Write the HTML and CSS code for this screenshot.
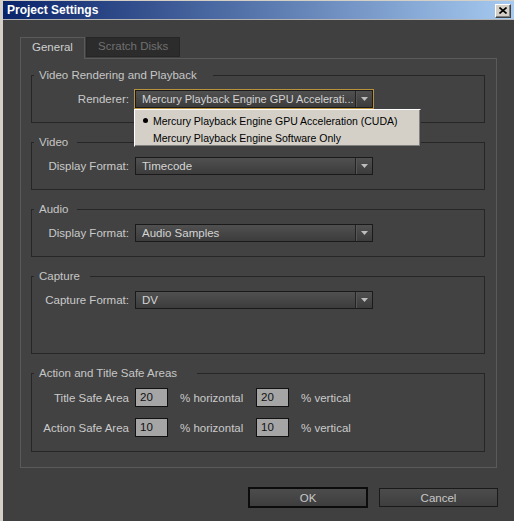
FILE: index.html
```html
<!DOCTYPE html>
<html lang="en">
<head>
<meta charset="utf-8">
<title>Project Settings</title>
<link rel="stylesheet" href="styles.css">
</head>
<body>
<div class="window">
  <div class="titlebar">
    <span class="title">Project Settings</span>
    <button class="close" type="button" aria-label="Close">
      <svg width="8" height="7" viewBox="0 0 8 7"><path d="M0.5 0.5L7.5 6.5M7.5 0.5L0.5 6.5" stroke="#000" stroke-width="1.6" fill="none"/></svg>
    </button>
  </div>
  <div class="client">
    <div class="tabs">
      <div class="tab active">General</div>
      <div class="tab inactive">Scratch Disks</div>
    </div>
    <div class="panel">
      <fieldset class="group">
        <legend class="lg-render">Video Rendering and Playback</legend>
        <div class="row">
          <span class="lbl">Renderer:</span>
          <div class="select focused">
            <span class="val">Mercury Playback Engine GPU Accelerati...</span>
            <span class="drop"><svg width="7" height="4" viewBox="0 0 7 4"><path d="M0 0H7L3.5 4Z" fill="#bdbdbd"/></svg></span>
            <div class="menu">
              <div class="item"><span class="dot"></span>Mercury Playback Engine GPU Acceleration (CUDA)</div>
              <div class="item"><span class="dot off"></span>Mercury Playback Engine Software Only</div>
            </div>
          </div>
        </div>
      </fieldset>
      <fieldset class="group">
        <legend class="lg-short">Video</legend>
        <div class="row">
          <span class="lbl">Display Format:</span>
          <div class="select">
            <span class="val">Timecode</span>
            <span class="drop"><svg width="7" height="4" viewBox="0 0 7 4"><path d="M0 0H7L3.5 4Z" fill="#bdbdbd"/></svg></span>
          </div>
        </div>
      </fieldset>
      <fieldset class="group">
        <legend class="lg-short">Audio</legend>
        <div class="row">
          <span class="lbl">Display Format:</span>
          <div class="select">
            <span class="val">Audio Samples</span>
            <span class="drop"><svg width="7" height="4" viewBox="0 0 7 4"><path d="M0 0H7L3.5 4Z" fill="#bdbdbd"/></svg></span>
          </div>
        </div>
      </fieldset>
      <fieldset class="group tall">
        <legend class="lg-capture">Capture</legend>
        <div class="row">
          <span class="lbl">Capture Format:</span>
          <div class="select">
            <span class="val">DV</span>
            <span class="drop"><svg width="7" height="4" viewBox="0 0 7 4"><path d="M0 0H7L3.5 4Z" fill="#bdbdbd"/></svg></span>
          </div>
        </div>
      </fieldset>
      <fieldset class="group">
        <legend class="lg-safe">Action and Title Safe Areas</legend>
        <div class="row row-num">
          <span class="lbl">Title Safe Area</span>
          <span class="num">20</span>
          <span class="unit unit-h">% horizontal</span>
          <span class="num">20</span>
          <span class="unit">% vertical</span>
        </div>
        <div class="row row-num">
          <span class="lbl">Action Safe Area</span>
          <span class="num">10</span>
          <span class="unit unit-h">% horizontal</span>
          <span class="num">10</span>
          <span class="unit">% vertical</span>
        </div>
      </fieldset>
    </div>
    <div class="buttons">
      <button class="btn btn-ok" type="button">OK</button>
      <button class="btn btn-cancel" type="button">Cancel</button>
    </div>
  </div>
</div>
</body>
</html>
```
FILE: styles.css
```css
* { box-sizing: border-box; }

body {
  margin: 0;
  background: #404040;
  font-family: "Liberation Sans", Arial, sans-serif;
  font-size: 11px;
  color: #c8c8c8;
}

.window {
  width: 514px;
  height: 521px;
  background: #404040;
  border-top: 1px solid #d4d0c8;
  border-left: 3px solid #d4d0c8;
  overflow: hidden;
}

.titlebar {
  height: 19px;
  display: flex;
  align-items: center;
  justify-content: space-between;
  padding: 0 3px 0 4px;
  background: linear-gradient(to right, #0a246a, #a6caf0);
  border-bottom: 1px solid #b4b4b4;
}

.title {
  color: #fff;
  font-weight: bold;
  font-size: 12px;
  line-height: 18px;
}

.close {
  width: 16px;
  height: 14px;
  padding: 0;
  margin-top: 1px;
  background: #d4d0c8;
  border: 1px solid;
  border-color: #fff #404040 #404040 #fff;
  box-shadow: inset -1px -1px #808080;
  display: flex;
  align-items: center;
  justify-content: center;
}

.client {
  padding: 17px 17px 0 17px;
}

.tabs {
  display: flex;
  align-items: flex-start;
  gap: 1px;
  height: 21px;
  font-size: 11.5px;
}

.tab {
  padding: 0 11px;
  white-space: nowrap;
}

.tab.active {
  position: relative;
  z-index: 1;
  width: 65px;
  height: 22px;
  line-height: 19px;
  padding-left: 11px;
  background: #424242;
  border: 1px solid #5a5a5a;
  border-bottom: none;
  color: #cfcfcf;
}

.tab.inactive {
  width: 94px;
  height: 20px;
  line-height: 17px;
  background: #2c2c2c;
  border: 1px solid #262626;
  color: #707070;
}

.panel {
  background: #424242;
  border: 1px solid #5a5a5a;
  padding: 10px 11px 15px 10px;
}

.group {
  margin: 13px 0 0;
  padding: 8px 0 14px;
  border: 1px solid #262626;
  min-width: 0;
}

.group:first-child { margin-top: 0; }

.group.tall { padding-bottom: 44px; }

legend {
  padding: 0 0 0 5px;
  margin-left: 2px;
  line-height: 13px;
  font-size: 11.5px;
  color: #c6c6c6;
  white-space: nowrap;
}

.lg-render { width: 179px; }
.lg-short { width: 43px; }
.lg-capture { width: 56px; }
.lg-safe { width: 163px; }

.row {
  display: flex;
  align-items: center;
  height: 18px;
}

.row-num { height: 19px; }
.row-num + .row-num { margin-top: 11px; }

.lbl {
  width: 97px;
  margin-right: 6px;
  text-align: right;
  font-size: 11.5px;
  color: #cacaca;
  white-space: nowrap;
}

.select {
  position: relative;
  width: 238px;
  height: 18px;
  display: flex;
  align-items: center;
  border: 1px solid #1a1a1a;
  background: linear-gradient(#505050, #3c3c3c);
}

.select.focused {
  outline: 1px solid #b8923c;
}

.val {
  flex: 1;
  padding-left: 6px;
  font-size: 11.5px;
  color: #d4d4d4;
  white-space: nowrap;
  overflow: hidden;
}

.select.focused .val { font-size: 11px; }

.drop {
  width: 17px;
  height: 100%;
  display: flex;
  align-items: center;
  justify-content: center;
  border-left: 1px solid #222;
  box-shadow: inset 1px 0 #565656;
}

.menu {
  position: absolute;
  left: -2px;
  top: 18px;
  z-index: 5;
  width: 287px;
  height: 38px;
  padding-top: 2px;
  background: #d4d0c8;
  border: 1px solid;
  border-color: #fff #404040 #404040 #fff;
  box-shadow: inset -1px -1px #808080;
  font-size: 10.5px;
  color: #000;
}

.item {
  height: 17px;
  display: flex;
  align-items: center;
  padding-left: 8px;
  white-space: nowrap;
}

.dot {
  width: 5px;
  height: 5px;
  margin-right: 5px;
  border-radius: 50%;
  background: #000;
}

.dot.off { visibility: hidden; }

.num {
  width: 33px;
  height: 19px;
  padding-left: 4px;
  line-height: 17px;
  border: 1px solid #111;
  background: #a5a5a5;
  color: #111;
  font-size: 11.5px;
}

.unit {
  margin: 0 12px;
  font-size: 11.5px;
  color: #cacaca;
  white-space: nowrap;
}

.unit-h { width: 64px; }

.buttons {
  display: flex;
  justify-content: flex-end;
  align-items: center;
  gap: 11px;
  margin-top: 19px;
  margin-right: -1px;
}

.btn {
  padding: 0;
  font-family: "Liberation Sans", Arial, sans-serif;
  font-size: 11.5px;
  color: #c8c8c8;
  background: linear-gradient(#4c4c4c, #3e3e3e);
}

.btn-ok {
  width: 120px;
  height: 21px;
  border: 2px solid #0c0c0c;
}

.btn-cancel {
  width: 119px;
  height: 19px;
  border: 1px solid #1a1a1a;
}
```
